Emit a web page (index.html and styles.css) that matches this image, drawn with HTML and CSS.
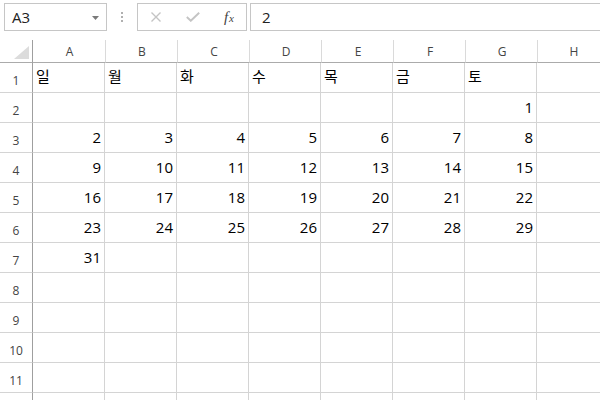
FILE: index.html
```html
<!DOCTYPE html>
<html lang="ko">
<head>
<meta charset="utf-8">
<link rel="stylesheet" href="styles.css">
</head>
<body>
<div class="fbar">
  <div class="namebox"><span class="ref">A3</span><svg class="dd" width="8" height="4" viewBox="0 0 8 4"><path d="M0 0H7L3.5 4Z" fill="#7a7a7a"/></svg></div>
  <div class="grip"><i></i><i></i><i></i></div>
  <div class="btns">
    <svg width="12" height="10" viewBox="0 0 12 10"><path d="M1.5 0.5L10.5 9.5M10.5 0.5L1.5 9.5" stroke="#c4c4c4" stroke-width="1.4" fill="none"/></svg>
    <svg width="14" height="10" viewBox="0 0 14 10"><path d="M0.8 5L4.8 8.8L13.2 0.8" stroke="#c4c4c4" stroke-width="1.9" fill="none"/></svg>
    <span class="fx">f<small>x</small></span>
  </div>
  <div class="input">2</div>
</div>
<div class="sheet">
  <div class="corner"><svg width="15" height="13" viewBox="0 0 15 13"><path d="M15 0V13H0Z" fill="#dcdcdc"/></svg></div>
  <div class="ch">A</div><div class="ch">B</div><div class="ch">C</div><div class="ch">D</div><div class="ch">E</div><div class="ch">F</div><div class="ch">G</div><div class="ch">H</div>

  <div class="rh">1</div><div class="c t">일</div><div class="c t">월</div><div class="c t">화</div><div class="c t">수</div><div class="c t">목</div><div class="c t">금</div><div class="c t">토</div><div class="c"></div>
  <div class="rh">2</div><div class="c"></div><div class="c"></div><div class="c"></div><div class="c"></div><div class="c"></div><div class="c"></div><div class="c">1</div><div class="c"></div>
  <div class="rh">3</div><div class="c">2</div><div class="c">3</div><div class="c">4</div><div class="c">5</div><div class="c">6</div><div class="c">7</div><div class="c">8</div><div class="c"></div>
  <div class="rh">4</div><div class="c">9</div><div class="c">10</div><div class="c">11</div><div class="c">12</div><div class="c">13</div><div class="c">14</div><div class="c">15</div><div class="c"></div>
  <div class="rh">5</div><div class="c">16</div><div class="c">17</div><div class="c">18</div><div class="c">19</div><div class="c">20</div><div class="c">21</div><div class="c">22</div><div class="c"></div>
  <div class="rh">6</div><div class="c">23</div><div class="c">24</div><div class="c">25</div><div class="c">26</div><div class="c">27</div><div class="c">28</div><div class="c">29</div><div class="c"></div>
  <div class="rh">7</div><div class="c">31</div><div class="c"></div><div class="c"></div><div class="c"></div><div class="c"></div><div class="c"></div><div class="c"></div><div class="c"></div>
  <div class="rh">8</div><div class="c"></div><div class="c"></div><div class="c"></div><div class="c"></div><div class="c"></div><div class="c"></div><div class="c"></div><div class="c"></div>
  <div class="rh">9</div><div class="c"></div><div class="c"></div><div class="c"></div><div class="c"></div><div class="c"></div><div class="c"></div><div class="c"></div><div class="c"></div>
  <div class="rh">10</div><div class="c"></div><div class="c"></div><div class="c"></div><div class="c"></div><div class="c"></div><div class="c"></div><div class="c"></div><div class="c"></div>
  <div class="rh">11</div><div class="c"></div><div class="c"></div><div class="c"></div><div class="c"></div><div class="c"></div><div class="c"></div><div class="c"></div><div class="c"></div>
  <div class="rh"></div><div class="c"></div><div class="c"></div><div class="c"></div><div class="c"></div><div class="c"></div><div class="c"></div><div class="c"></div><div class="c"></div>
</div>
</body>
</html>
```
FILE: styles.css
```css
html, body {
  margin: 0;
  padding: 0;
  width: 600px;
  height: 400px;
  overflow: hidden;
  background: #fff;
  font-family: "Open Sans", "Noto Sans CJK KR", sans-serif;
  color: #000;
}
.fbar {
  display: flex;
  align-items: stretch;
  height: 28px;
  padding: 3px 0 0 4px;
  box-sizing: content-box;
}
.namebox {
  border: 1px solid #c6c6c6;
  display: flex;
  align-items: center;
  justify-content: space-between;
  padding: 0 6px 0 7px;
  box-sizing: border-box;
  width: 103px;
  font-size: 15px;
  color: #222;
}
.dd { margin-top: 1px; }
.grip {
  width: 30px;
  display: flex;
  flex-direction: column;
  align-items: center;
  justify-content: center;
  gap: 2px;
}
.grip i {
  display: block;
  width: 2px;
  height: 2px;
  background: #b0b0b0;
}
.btns {
  width: 110px;
  box-sizing: border-box;
  border: 1px solid #c6c6c6;
  display: flex;
  align-items: center;
  padding: 0 11px 0 12px;
  justify-content: space-between;
}
.fx {
  font-family: "Liberation Serif", serif;
  font-style: italic;
  font-size: 15px;
  color: #444;
  padding-right: 1px;
}
.fx small {
  font-size: 11px;
  margin-left: 1px;
}
.input {
  flex: 1;
  margin-left: 3px;
  border: 1px solid #c6c6c6;
  border-right: none;
  display: flex;
  align-items: center;
  padding-left: 11px;
  font-size: 15px;
  color: #222;
}
.sheet {
  margin-top: 9px;
  height: 360px;
  overflow: hidden;
  display: grid;
  grid-template-columns: 33px repeat(7, 72px) 72px;
  grid-template-rows: 23px repeat(12, 30px);
}
.corner {
  border-right: 1px solid #9f9f9f;
  border-bottom: 1px solid #ababab;
  display: flex;
  align-items: flex-end;
  justify-content: flex-end;
  padding: 0 3px 3px 0;
}
.ch {
  border-left: 1px solid #dadada;
  border-bottom: 1px solid #ababab;
  display: flex;
  align-items: center;
  justify-content: center;
  font-size: 12px;
  color: #444;
  padding-left: 1px;
}
.ch:nth-child(2) { border-left: none; }
.rh {
  border-right: 1px solid #9f9f9f;
  border-bottom: 1px solid #d4d4d4;
  display: flex;
  align-items: flex-end;
  justify-content: center;
  font-size: 12px;
  color: #444;
  padding-bottom: 3px;
  box-sizing: border-box;
}
.c {
  border-right: 1px solid #d4d4d4;
  border-bottom: 1px solid #d4d4d4;
  display: flex;
  align-items: flex-end;
  justify-content: flex-end;
  padding: 0 3px 6px 0;
  box-sizing: border-box;
  font-size: 15px;
  line-height: 18px;
}
.c.t {
  justify-content: flex-start;
  padding-left: 3px;
  padding-bottom: 7px;
}
```
